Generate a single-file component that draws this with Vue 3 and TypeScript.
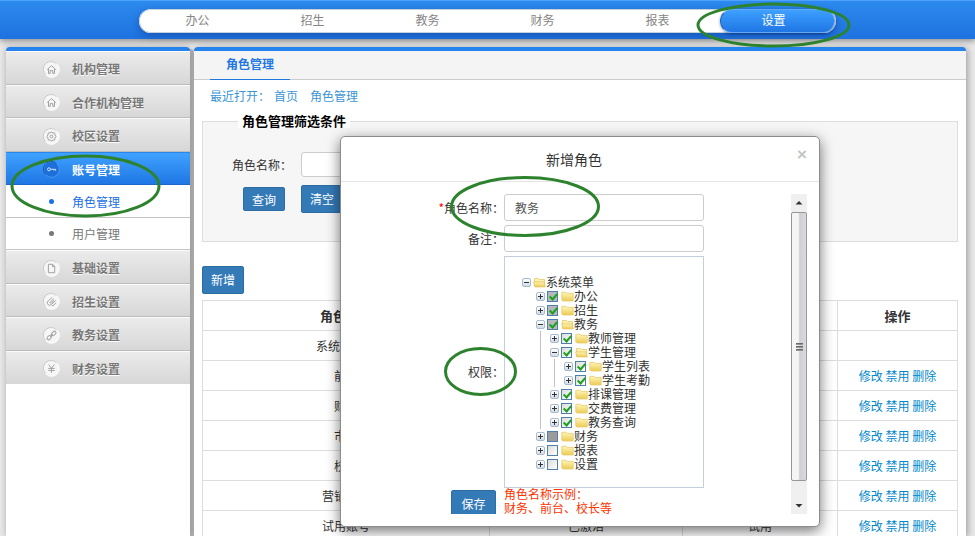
<script setup lang="ts">
import { reactive, ref } from 'vue'

type IconName = 'home' | 'gear' | 'key' | 'page' | 'clip' | 'link' | 'yen'

interface MenuItem {
  label: string
  icon: IconName
  children?: string[]
}

type CheckState = 'none' | 'full' | 'half' | 'solid' | 'empty'

interface TreeNode {
  label: string
  level: number
  open: boolean
  state: CheckState
  guides: number[]
}

const tabs = ['办公', '招生', '教务', '财务', '报表', '设置']
const activeTab = ref('设置')

const menu: MenuItem[] = [
  { label: '机构管理', icon: 'home' },
  { label: '合作机构管理', icon: 'home' },
  { label: '校区设置', icon: 'gear' },
  { label: '账号管理', icon: 'key', children: ['角色管理', '用户管理'] },
  { label: '基础设置', icon: 'page' },
  { label: '招生设置', icon: 'clip' },
  { label: '教务设置', icon: 'link' },
  { label: '财务设置', icon: 'yen' },
]
const activeMenu = ref('账号管理')
const activeSub = ref('角色管理')

const filterName = ref('')
const form = reactive({ name: '教务', remark: '' })

const roles = [
  { name: '系统管理员', status: '', type: '', editable: false },
  { name: '前台', status: '', type: '', editable: true },
  { name: '财务', status: '', type: '', editable: true },
  { name: '市场', status: '', type: '', editable: true },
  { name: '校长', status: '', type: '', editable: true },
  { name: '营销人员', status: '', type: '', editable: true },
  { name: '试用账号', status: '已激活', type: '试用', editable: true },
]

const tree: TreeNode[] = [
  { label: '系统菜单', level: 0, open: true, state: 'none', guides: [] },
  { label: '办公', level: 1, open: false, state: 'half', guides: [] },
  { label: '招生', level: 1, open: false, state: 'half', guides: [] },
  { label: '教务', level: 1, open: true, state: 'half', guides: [] },
  { label: '教师管理', level: 2, open: false, state: 'full', guides: [1] },
  { label: '学生管理', level: 2, open: true, state: 'full', guides: [1] },
  { label: '学生列表', level: 3, open: false, state: 'full', guides: [1, 2] },
  { label: '学生考勤', level: 3, open: false, state: 'full', guides: [1, 2] },
  { label: '排课管理', level: 2, open: false, state: 'full', guides: [1] },
  { label: '交费管理', level: 2, open: false, state: 'full', guides: [1] },
  { label: '教务查询', level: 2, open: false, state: 'full', guides: [1] },
  { label: '财务', level: 1, open: false, state: 'solid', guides: [] },
  { label: '报表', level: 1, open: false, state: 'empty', guides: [] },
  { label: '设置', level: 1, open: false, state: 'empty', guides: [] },
]
</script>

<template>
  <div class="page">
    <header class="top">
      <nav class="tabs">
        <button
          v-for="t in tabs"
          :key="t"
          type="button"
          class="tab"
          :class="{ active: t === activeTab }"
          @click="activeTab = t"
        >{{ t }}</button>
      </nav>
    </header>

    <div class="columns">
      <aside class="side">
        <ul class="menu">
          <li v-for="m in menu" :key="m.label">
            <a href="#" class="item" :class="{ active: m.label === activeMenu }" @click.prevent="activeMenu = m.label">
              <svg class="ico" viewBox="0 0 17 17" width="17" height="17" aria-hidden="true">
                <circle class="disc" cx="8.5" cy="8.5" r="7.8" />
                <path class="rim" d="M2.6 13.6A7.6 7.6 0 0 1 13.6 2.8" />
                <g class="glyph">
                  <path v-if="m.icon === 'home'" d="M4.2 8.6 8.5 4.6l4.3 4M5.5 8v4.4h1.7V9.6h2.6v2.8h1.7V8" />
                  <template v-else-if="m.icon === 'gear'">
                    <path d="M8.5 4.1 10 4.9l1.7.1.2 1.7 1 1.8-1 1.7-.2 1.7-1.7.2-1.5.9-1.6-.9-1.7-.2-.2-1.7-1-1.7 1-1.8.2-1.7 1.7-.1z" />
                    <circle cx="8.5" cy="8.5" r="1.4" />
                  </template>
                  <template v-else-if="m.icon === 'key'">
                    <circle cx="6" cy="8.3" r="1.5" />
                    <path d="M7.6 8.3h5v1.5M10.8 8.3v1.2" />
                  </template>
                  <path v-else-if="m.icon === 'page'" d="M5.4 4.3h4.3l2 2v6.4H5.4zM9.5 4.4v2.1h2.1" />
                  <path v-else-if="m.icon === 'clip'" d="M9.2 4.3 5.2 8c-2.5 2.5.6 5.7 3.2 3.4l4.4-4.1M11 5.6 7.4 8.9c-.8.9.2 1.7 1 1L11 7.6M8.8 12.8c1.7-.1 3.1-1.4 4-2.9" />
                  <template v-else-if="m.icon === 'link'">
                    <rect x="8.2" y="4.9" width="5" height="3.1" rx="1.5" transform="rotate(-45 10.7 6.4)" />
                    <rect x="3.8" y="9" width="5" height="3.1" rx="1.5" transform="rotate(-45 6.3 10.6)" />
                    <path d="m7 10 3-3" />
                  </template>
                  <path v-else d="m5.6 4.5 2.9 3.7 2.9-3.7M8.5 8.2v4.6M5.3 8.4h6.4M5.3 10.4h6.4" />
                </g>
              </svg>
              <span>{{ m.label }}</span>
            </a>
            <ul v-if="m.children" class="sub">
              <li v-for="s in m.children" :key="s">
                <a href="#" class="subitem" :class="{ active: s === activeSub }" @click.prevent="activeSub = s">
                  <span class="dot"></span>{{ s }}
                </a>
              </li>
            </ul>
          </li>
        </ul>
      </aside>

      <main class="main">
        <div class="bar"><a href="#" class="bar-tab">角色管理</a></div>
        <div class="content">
          <p class="crumbs">
            <span>最近打开：</span>
            <a href="#">首页</a>
            <a href="#" class="last">角色管理</a>
          </p>

          <fieldset class="filter">
            <legend>角色管理筛选条件</legend>
            <div class="line">
              <label for="filter-name">角色名称：</label>
              <input id="filter-name" v-model="filterName" class="box" type="text" />
            </div>
            <div class="actions">
              <button type="button" class="btn small">查询</button>
              <button type="button" class="btn">清空</button>
            </div>
          </fieldset>

          <button type="button" class="btn">新增</button>

          <table class="grid">
            <colgroup>
              <col class="c1" /><col class="c2" /><col class="c3" /><col class="c4" />
            </colgroup>
            <thead>
              <tr><th>角色名称</th><th></th><th></th><th>操作</th></tr>
            </thead>
            <tbody>
              <tr v-for="r in roles" :key="r.name">
                <td>{{ r.name }}</td>
                <td>{{ r.status }}</td>
                <td>{{ r.type }}</td>
                <td>
                  <template v-if="r.editable">
                    <a href="#">修改</a>&#32;<a href="#">禁用</a>&#32;<a href="#">删除</a>
                  </template>
                </td>
              </tr>
            </tbody>
          </table>
        </div>
      </main>
    </div>

    <section class="modal" role="dialog" aria-labelledby="modal-title">
      <div class="modal-head">
        <h2 id="modal-title">新增角色</h2>
        <button type="button" class="close">×</button>
      </div>
      <div class="modal-body">
        <form class="form" @submit.prevent>
          <label for="role-name"><span class="star">*</span>角色名称：</label>
          <input id="role-name" v-model="form.name" class="box tall" type="text" />
          <label for="role-remark">备注：</label>
          <input id="role-remark" v-model="form.remark" class="box tall" type="text" />
          <span class="caption">权限：</span>
          <div class="tree">
            <div v-for="n in tree" :key="n.label" class="node">
              <span
                v-for="l in n.level"
                :key="l"
                class="indent"
                :class="{ guide: n.guides.includes(l - 1) }"
              ></span>
              <button type="button" class="toggle" :class="{ open: n.open }"></button>
              <label class="leaf">
                <input
                  v-if="n.state !== 'none'"
                  type="checkbox"
                  :class="n.state"
                  :checked="n.state === 'full' || n.state === 'half'"
                />
                <svg class="folder" viewBox="0 0 13 11" width="13" height="11" aria-hidden="true">
                  <defs>
                    <linearGradient id="fold" x1="0" y1="0" x2="0" y2="1">
                      <stop offset="0" stop-color="#fff6b8" />
                      <stop offset="1" stop-color="#eccb55" />
                    </linearGradient>
                  </defs>
                  <template v-if="n.open">
                    <path d="M1.5 9.5v-8h4l1 1h5v7z" fill="#fbf0b0" stroke="#e8d27c" />
                    <path d="M.6 4.9h10.2l1.6 5H2z" fill="url(#fold)" stroke="#e3c766" stroke-width=".8" />
                  </template>
                  <path v-else d="M.8 9V1.3h4.4l1 1.1h6V10H1.8z" fill="url(#fold)" stroke="#e6cb6c" stroke-width=".8" />
                </svg>
                <span class="name">{{ n.label }}</span>
              </label>
            </div>
          </div>
          <div class="save"><button type="submit" class="btn wide">保存</button></div>
          <p class="hint">角色名称示例：<br />财务、前台、校长等</p>
        </form>
        <div class="scroll" aria-hidden="true">
          <svg viewBox="0 0 16 18" width="16" height="18"><path d="M4.5 10.5 8 7l3.5 3.5z" fill="#333" /></svg>
          <div class="thumb"><i></i><i></i><i></i></div>
          <svg viewBox="0 0 16 33" width="16" height="33"><path d="M4.5 23 8 26.5l3.5-3.5z" fill="#333" /></svg>
        </div>
      </div>
    </section>

    <svg class="marks" width="900" height="420" viewBox="0 0 900 420" aria-hidden="true">
      <ellipse cx="773.5" cy="25" rx="75.5" ry="21" />
      <ellipse cx="85.5" cy="186" rx="73.5" ry="30" />
      <ellipse cx="525" cy="206.5" rx="73.5" ry="29" />
      <ellipse cx="480.5" cy="371.5" rx="35" ry="23" />
    </svg>
  </div>
</template>

<style>
body {
  background: #e6e6e6;
}
</style>

<style scoped>
* {
  box-sizing: border-box;
}
.page {
  position: relative;
  height: 100vh;
  overflow: hidden;
  display: flex;
  flex-direction: column;
  background: #e8e8e8;
  font: 12px/16px "Noto Sans CJK SC", sans-serif;
  color: #333;
}
.page button,
.page input {
  font: inherit;
  margin: 0;
}
a {
  text-decoration: none;
}
ul {
  list-style: none;
  margin: 0;
  padding: 0;
}
.top {
  flex: none;
  height: 39px;
  padding: 8px 139px 0;
  border-top: 1px solid #4da4ff;
  background: linear-gradient(#2c8aed, #1f72e0);
  box-shadow: 0 2px 6px rgba(0, 0, 0, 0.4);
  z-index: 1;
}
.tabs {
  display: grid;
  grid-template-columns: repeat(6, 1fr);
  height: 24px;
  padding: 0 6px 0 1px;
  border-radius: 12px;
  background: #fff;
  box-shadow: 0 0 0 1px #c6d0da inset, 0 3px 8px rgba(0, 20, 80, 0.3);
}
.tab {
  padding: 0 0 2px;
  border: 0;
  background: none;
  color: #868686;
}
.page .tab.active {
  margin: 0 -5px 0 5px;
  padding-right: 8px;
  border: 1px solid #65a9f5;
  border-left-color: #1d62bd;
  border-radius: 12px;
  background: linear-gradient(#3ea0ff, #1f76e4);
  box-shadow: 0 1px 3px rgba(0, 0, 50, 0.4);
  color: #fff;
}
.columns {
  flex: 1;
  min-height: 0;
  display: flex;
  gap: 4px;
  padding: 8px 9px 0 6px;
}
.side,
.main {
  border-top: 4px solid #2483ec;
  border-radius: 4px 4px 0 0;
  background: #fff;
}
.side {
  flex: none;
  width: 184px;
  box-shadow: 0 0 6px rgba(0, 0, 0, 0.25), 4px 2px 0 #b8b8b8;
}
.main {
  flex: 1;
  min-width: 0;
  box-shadow: 2px 1px 6px rgba(0, 0, 0, 0.3);
}
.item {
  display: flex;
  align-items: center;
  gap: 12px;
  height: 33px;
  padding-left: 37px;
  padding-top: 2px;
  border-top: 1px solid #fbfbfb;
  border-bottom: 1px solid #bcbcbc;
  background: linear-gradient(#ebebeb, #d7d7d7);
  color: #777;
  font-weight: 700;
  text-shadow: 0 1px 0 #fff;
}
.menu > li:nth-child(odd) > .item {
  height: 34px;
}
.menu > li:last-child > .item {
  border-bottom-color: #d7d7d7;
}
.item.active {
  border-top-color: #2a86ea;
  border-bottom-color: #1c66cc;
  background: linear-gradient(#3fa2ff, #1f76e4);
  color: #fff;
  text-shadow: none;
}
.ico {
  flex: none;
}
.disc {
  fill: #f6f6f6;
  stroke: #fff;
}
.rim {
  fill: none;
  stroke: #c8c8c8;
}
.glyph {
  fill: none;
  stroke: #a2a2a2;
}
.active .disc {
  fill: #1d70da;
  stroke: #4b98f2;
}
.active .rim {
  stroke: #1657b0;
}
.active .glyph {
  stroke: #cfe4ff;
}
.sub {
  padding-top: 1px;
}
.subitem {
  display: flex;
  align-items: center;
  gap: 18px;
  height: 32px;
  padding-left: 43px;
  border-bottom: 1px solid #c4c4c4;
  color: #777;
}
.subitem.active {
  color: #1b6fe8;
}
.dot {
  width: 5px;
  height: 5px;
  border-radius: 50%;
  background: currentColor;
}
.bar {
  height: 29px;
  padding-left: 16px;
  border-bottom: 1px solid #ccc;
  background: #f4f4f4;
  display: flex;
}
.bar-tab {
  height: 29px;
  padding: 5px 16px 0;
  border-bottom: 1px solid #1f78e0;
  color: #1f78e0;
  font-weight: 700;
}
.content {
  padding: 8px 8px 0;
}
.crumbs {
  display: flex;
  gap: 4px;
  margin: 0 0 10px;
  padding-left: 8px;
}
.crumbs,
.crumbs a {
  color: #3d96d6;
}
.crumbs .last {
  margin-left: 8px;
}
.filter {
  height: 128px;
  margin: 0 0 24px;
  padding: 24px 0 0 29px;
  border: 1px solid #ddd;
  background: #f6f6f6;
}
.filter legend {
  margin-left: 6px;
  padding: 0 4px;
  background: #fff;
  color: #000;
  font-size: 13px;
  font-weight: 700;
  line-height: 14px;
}
.line {
  display: flex;
  align-items: center;
  gap: 9px;
}
.box {
  width: 200px;
  height: 25px;
  padding: 0 10px;
  border: 1px solid #ccc;
  border-radius: 3px;
  background: #fff;
  color: #555;
  outline: 0;
}
.tall {
  height: 27px;
}
.actions {
  display: flex;
  align-items: center;
  gap: 16px;
  padding: 8px 0 0 11px;
}
.btn {
  min-width: 42px;
  height: 28px;
  padding: 0 8px;
  border: 1px solid #2e6da4;
  border-radius: 2px;
  background: #337ab7;
  color: #fff;
}
.small {
  height: 24px;
  padding-top: 2px;
}
.grid {
  width: 100%;
  margin-top: 6px;
  border-collapse: collapse;
  table-layout: fixed;
}
.c1 {
  width: 38%;
}
.c3 {
  width: 155px;
}
.c4 {
  width: 120px;
}
.grid th,
.grid td {
  height: 30px;
  padding: 0;
  border: 1px solid #ddd;
  text-align: center;
}
.grid th {
  font-size: 13px;
  font-weight: 700;
}
.grid a {
  color: #0088cc;
}
.modal {
  position: absolute;
  z-index: 2;
  top: 136px;
  left: 340px;
  width: 480px;
  border: 1px solid #8c8c8c;
  border-radius: 5px;
  background: #fff;
  box-shadow: 0 4px 14px rgba(0, 0, 0, 0.55);
}
.modal-head {
  position: relative;
  height: 45px;
  padding: 12px 12px 0 0;
  border-bottom: 1px solid #e5e5e5;
}
.modal-head h2 {
  margin: 0;
  font-size: 14px;
  font-weight: 400;
  line-height: 20px;
  text-align: center;
}
.page .close {
  position: absolute;
  top: 9px;
  right: 8px;
  width: 18px;
  height: 18px;
  padding: 0;
  border: 0;
  background: none;
  color: #c4c4c4;
  font: 700 17px/18px "Liberation Sans", sans-serif;
}
.modal-body {
  display: flex;
  justify-content: space-between;
  height: calc(100vh - 216px);
  margin: 12px;
  overflow: hidden;
}
.form {
  display: grid;
  grid-template-columns: 151px 200px;
  grid-auto-rows: max-content;
  row-gap: 4px;
  align-items: center;
  align-content: start;
}
.form > label,
.caption {
  text-align: right;
}
.star {
  color: #f00;
}
.tree {
  height: 232px;
  padding: 18px 0 0 17px;
  border: 1px solid #c3cedb;
}
.tree,
.hint {
  font-family: "Liberation Sans", "Noto Sans CJK SC", sans-serif;
  line-height: 14px;
}
.node {
  display: flex;
  align-items: center;
  height: 14px;
}
.indent {
  flex: none;
  width: 14px;
  height: 14px;
}
.guide {
  background: linear-gradient(#c2c2c2, #c2c2c2) 4px 0 / 1px 14px no-repeat;
}
.toggle {
  position: relative;
  flex: none;
  width: 9px;
  height: 9px;
  padding: 0;
  border: 1px solid #a9b9ce;
  border-radius: 2px;
  background: linear-gradient(#fff, #d0dbe8);
}
.page .toggle {
  margin-right: 2px;
}
.toggle::before,
.toggle:not(.open)::after {
  content: "";
  position: absolute;
  top: 3px;
  left: 1px;
  width: 5px;
  height: 1px;
  background: #333;
}
.toggle:not(.open)::after {
  top: 1px;
  left: 3px;
  width: 1px;
  height: 5px;
}
.leaf {
  display: flex;
  align-items: center;
}
.name {
  padding-top: 2px;
}
.leaf input {
  appearance: none;
  position: relative;
  width: 11px;
  height: 11px;
  border: 1px solid #4f7fae;
  background: linear-gradient(135deg, #dcdcd8, #fff);
}
.page .leaf input {
  margin-right: 3px;
}
.leaf .half {
  background: #b4b8ba;
}
.leaf .solid {
  background: #9b9b9b;
}
.leaf input:checked::after {
  content: "";
  position: absolute;
  top: 0;
  left: 3px;
  width: 3px;
  height: 6px;
  border: solid #1fa01f;
  border-width: 0 2px 2px 0;
  transform: rotate(42deg);
}
.folder {
  flex: none;
}
.save {
  align-self: start;
  display: flex;
  justify-content: flex-end;
  margin-top: -2px;
  padding-right: 8px;
}
.wide {
  min-width: 45px;
}
.hint {
  align-self: start;
  margin: -4px 0 0;
  color: #f30;
}
.scroll {
  display: flex;
  flex-direction: column;
  width: 16px;
  background: #f0f0f0;
}
.scroll svg {
  flex: none;
}
.thumb {
  flex: 1;
  display: flex;
  flex-direction: column;
  align-items: center;
  justify-content: center;
  gap: 1px;
  border: 1px solid #979797;
  border-radius: 2px;
  background: linear-gradient(90deg, #f5f5f5 0 45%, #cfcfd4 55%, #dadade);
}
.thumb i {
  width: 7px;
  height: 2px;
  background: linear-gradient(#555, #aaa);
}
.marks {
  position: absolute;
  z-index: 3;
  top: 0;
  left: 0;
  pointer-events: none;
  fill: none;
  stroke: #2d832d;
  stroke-width: 3px;
}
</style>
